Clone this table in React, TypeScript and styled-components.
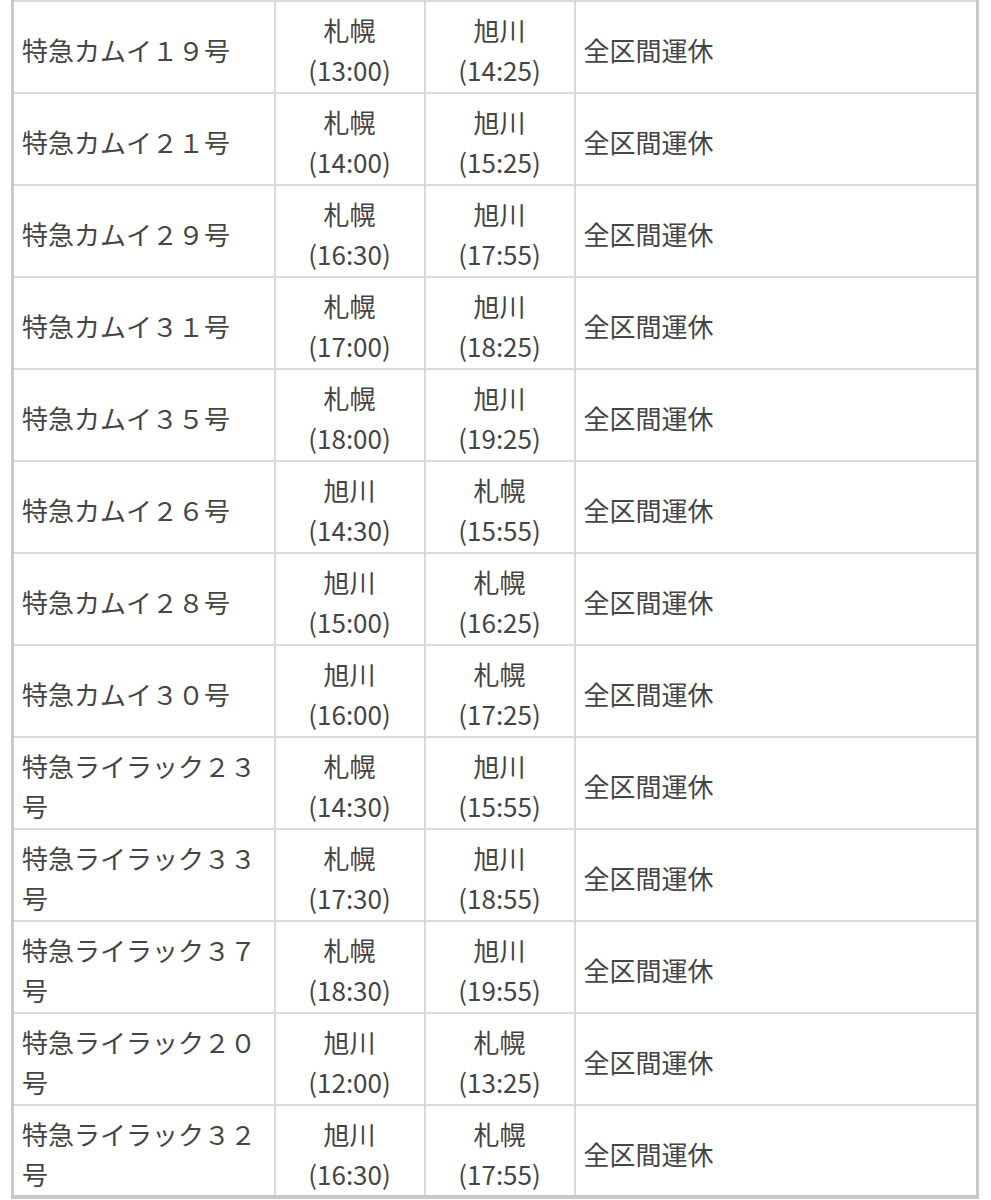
import styled, { createGlobalStyle } from "styled-components";

const GlobalStyle = createGlobalStyle`
  html, body {
    margin: 0;
    padding: 0;
    background: #ffffff;
  }
  body {
    font-family: "Noto Sans CJK JP", "Noto Sans", sans-serif;
    color: #444444;
  }
`;

const Page = styled.div`
  padding: 0 12px 0 11px;
`;

const Table = styled.table`
  width: 968px;
  border-collapse: collapse;
  table-layout: fixed;
  border-left: 3px solid #c9c9c9;
  border-right: 3px solid #c9c9c9;
  border-bottom: 4px solid #c9c9c9;
  border-top: 2px solid #d6d6d6;
`;

const Row = styled.tr`
  height: 92px;
`;

const Cell = styled.td<{ $center?: boolean }>`
  border: 2px solid #d9d9d9;
  padding: 7px 8px 1px 8px;
  font-size: 26px;
  font-weight: 400;
  line-height: 40px;
  vertical-align: middle;
  text-align: ${(p) => (p.$center ? "center" : "left")};
  color: #454545;
`;

type Train = {
  name: string;
  from: string;
  fromTime: string;
  to: string;
  toTime: string;
};

const SAPPORO = "札幌";
const ASAHIKAWA = "旭川";

const trains: Train[] = [
  { name: "特急カムイ１９号", from: SAPPORO, fromTime: "13:00", to: ASAHIKAWA, toTime: "14:25" },
  { name: "特急カムイ２１号", from: SAPPORO, fromTime: "14:00", to: ASAHIKAWA, toTime: "15:25" },
  { name: "特急カムイ２９号", from: SAPPORO, fromTime: "16:30", to: ASAHIKAWA, toTime: "17:55" },
  { name: "特急カムイ３１号", from: SAPPORO, fromTime: "17:00", to: ASAHIKAWA, toTime: "18:25" },
  { name: "特急カムイ３５号", from: SAPPORO, fromTime: "18:00", to: ASAHIKAWA, toTime: "19:25" },
  { name: "特急カムイ２６号", from: ASAHIKAWA, fromTime: "14:30", to: SAPPORO, toTime: "15:55" },
  { name: "特急カムイ２８号", from: ASAHIKAWA, fromTime: "15:00", to: SAPPORO, toTime: "16:25" },
  { name: "特急カムイ３０号", from: ASAHIKAWA, fromTime: "16:00", to: SAPPORO, toTime: "17:25" },
  { name: "特急ライラック２３号", from: SAPPORO, fromTime: "14:30", to: ASAHIKAWA, toTime: "15:55" },
  { name: "特急ライラック３３号", from: SAPPORO, fromTime: "17:30", to: ASAHIKAWA, toTime: "18:55" },
  { name: "特急ライラック３７号", from: SAPPORO, fromTime: "18:30", to: ASAHIKAWA, toTime: "19:55" },
  { name: "特急ライラック２０号", from: ASAHIKAWA, fromTime: "12:00", to: SAPPORO, toTime: "13:25" },
  { name: "特急ライラック３２号", from: ASAHIKAWA, fromTime: "16:30", to: SAPPORO, toTime: "17:55" },
];

function App() {
  return (
    <Page>
      <GlobalStyle />
      <Table>
        <colgroup>
          <col style={{ width: 262 }} />
          <col style={{ width: 150 }} />
          <col style={{ width: 150 }} />
          <col />
        </colgroup>
        <tbody>
          {trains.map((t) => (
            <Row key={t.name}>
              <Cell>{t.name}</Cell>
              <Cell $center>
                {t.from}
                <br />({t.fromTime})
              </Cell>
              <Cell $center>
                {t.to}
                <br />({t.toTime})
              </Cell>
              <Cell>全区間運休</Cell>
            </Row>
          ))}
        </tbody>
      </Table>
    </Page>
  );
}

export default App;
